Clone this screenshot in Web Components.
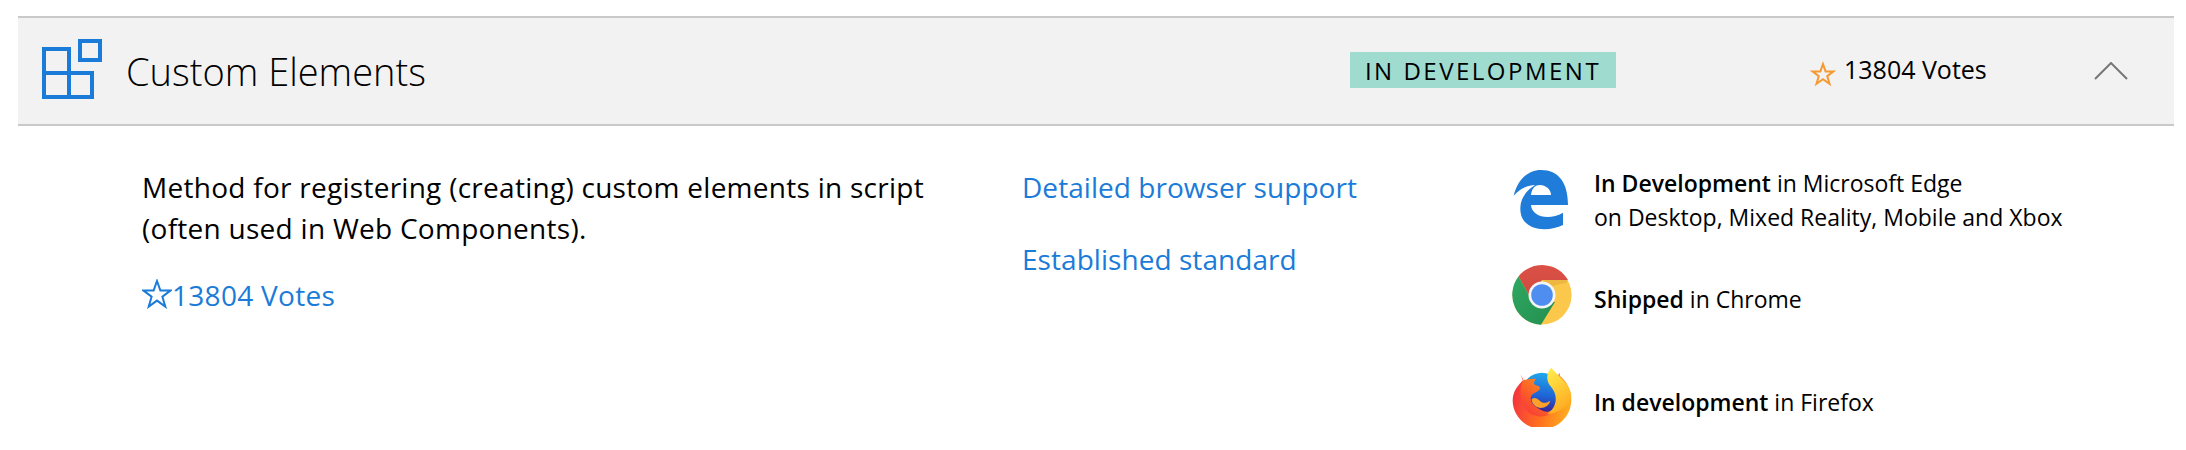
<!DOCTYPE html>
<html lang="en"><head><meta charset="utf-8"><title>Custom Elements</title>
<style>
html,body{margin:0;background:#fff}
body{padding:16px 12px 0 18px;font-family:"Open Sans","Noto Sans",sans-serif;color:#000}
</style></head><body>
<status-card name="Custom Elements" status="IN DEVELOPMENT" votes="13804 Votes">
  <span slot="desc">Method for registering (creating) custom elements in script<br>(often used in Web Components).</span>
  <a slot="links" href="#">Detailed browser support</a>
  <a slot="links" href="#">Established standard</a>
  <browser-row icon="edge" style="--dy:0px"><b>In Development</b> in Microsoft Edge<br>on Desktop, Mixed Reality, Mobile and Xbox</browser-row>
  <browser-row icon="chrome" style="--dy:8px;margin-top:31px"><b>Shipped</b> in Chrome</browser-row>
  <browser-row icon="firefox" style="--dy:10px;margin-top:42px"><b>In development</b> in Firefox</browser-row>
</status-card>
<script>
const ICONS={
edge:`<svg viewBox="65 55 180 180" width="60" height="60"><path fill="#1f7cd8" d="M70 132C82 85 112 55 152 55C204 55 233 92 233 160H122C124 195 175 208 218 183V220C172 243 88 240 90 168C91 140 108 115 135 100C112 100 90 110 70 132ZM122 130H182C182 106 148 90 130 108C125 114 123 122 122 130Z"/></svg>`,
chrome:`<svg viewBox="0 0 60 60" width="60" height="60"><defs><linearGradient id="r" x1="0" y1="0" x2="0" y2="1"><stop offset="0" stop-color="#db5047"/><stop offset="1" stop-color="#d04a3f"/></linearGradient><linearGradient id="g" x1="0" y1="0" x2="1" y2="1"><stop offset="0" stop-color="#2fa862"/><stop offset="1" stop-color="#238f4f"/></linearGradient></defs>
<circle cx="30" cy="30" r="29.6" fill="#fcc84b"/>
<path fill="url(#r)" d="M56 15A30 30 0 0 0 6.5 11.5L18 32L30 15Z"/>
<path fill="url(#g)" d="M6.5 11.5A30 30 0 0 0 29 59.8L43 37L18 32Z"/>
<path fill="#e0a93a" opacity=".55" d="M30 15H56L54 18L40 21Z"/>
<circle cx="30" cy="30" r="13.5" fill="#f4f5f7"/><circle cx="30" cy="30" r="10.8" fill="#4f8ef0"/></svg>`,
firefox:`<svg viewBox="65 45 180 180" width="60" height="60" style="overflow:visible"><defs>
<linearGradient id="b" x1="0" y1=".5" x2="1" y2=".7"><stop offset="0" stop-color="#f5343f"/><stop offset=".5" stop-color="#ff6f1f"/><stop offset="1" stop-color="#ffb21e"/></linearGradient>
<linearGradient id="d" x1=".6" y1="0" x2=".5" y2="1"><stop offset="0" stop-color="#22a9ec"/><stop offset=".6" stop-color="#1f62d4"/><stop offset="1" stop-color="#3b1d8f"/></linearGradient>
<linearGradient id="y" x1=".3" y1="0" x2=".7" y2="1"><stop offset="0" stop-color="#ffe94a"/><stop offset="1" stop-color="#ffa51e"/></linearGradient>
<linearGradient id="h" x1=".9" y1="0" x2=".1" y2="1"><stop offset="0" stop-color="#ff9a1e"/><stop offset=".6" stop-color="#fb5a28"/><stop offset="1" stop-color="#f5343f"/></linearGradient></defs>
<path fill="url(#b)" d="M91 67L99 84C82 100 68 118 67 145C67 192 106 231 155 231C204 231 243 192 243 143C243 112 228 88 209 72L208 62L200 74L160 100L110 90L98 88Z"/>
<circle cx="155" cy="122" r="60" fill="url(#d)"/>
<path fill="url(#h)" d="M99 84C110 82 124 80 137 80C130 90 128 96 136 100C148 102 152 108 146 114C138 122 126 124 122 134C118 148 128 160 146 170C160 180 176 182 190 178C170 200 128 200 106 172C88 148 86 110 99 84Z"/>
<path fill="#ffa02a" d="M124 142C132 134 142 140 150 148C160 156 170 152 180 146C176 162 158 172 142 166C132 162 124 152 124 142Z"/>
<path fill="url(#y)" d="M183 47C168 62 166 86 182 104C202 128 204 162 170 187C210 182 240 160 243 132C240 96 204 74 183 47Z"/>
</svg>`};
class CmdIcon extends HTMLElement{constructor(){super();this.attachShadow({mode:'open'}).innerHTML=`<style>:host{display:block;width:60px;height:60px;line-height:0}</style>
<svg width="60" height="60" viewBox="0 0 60 60" fill="none" stroke="#1b7bd8" stroke-width="4"><path d="M2 10H27V58H2ZM2 34H50V58H27"/><rect x="38" y="2" width="20" height="19"/></svg>`}}
customElements.define('feature-icon',CmdIcon);
class BrowserRow extends HTMLElement{constructor(){super();const s=this.attachShadow({mode:'open'});s.innerHTML=`<style>
:host{display:flex;align-items:center;gap:22px;font-size:23px;line-height:34px;color:#000}
.i{width:60px;height:60px;flex:none;line-height:0}.t{padding-top:var(--dy,0);white-space:nowrap}
::slotted(b){font-weight:600}
</style><div class="i"></div><div class="t"><slot></slot></div>`;
this._s=s}
connectedCallback(){this._s.querySelector('.i').innerHTML=ICONS[this.getAttribute('icon')]}}
customElements.define('browser-row',BrowserRow);
class StatusCard extends HTMLElement{constructor(){super();const s=this.attachShadow({mode:'open'});s.innerHTML=`<style>
:host{display:block}
header{height:106px;background:#f2f2f2;border-top:2px solid #c9c9c9;border-bottom:2px solid #c9c9c9;display:grid;grid-template-columns:108px 1224px 460px 284px 1fr;align-items:center;box-sizing:content-box}
.ic{padding-left:24px;margin-top:-5px}
h2{margin:0;font-weight:300;font-size:38px;line-height:50px;margin-top:-1px;white-space:nowrap}
.badge{justify-self:start;background:#9fdccf;height:36px;width:266px;display:flex;align-items:center;justify-content:center;font-size:24px;letter-spacing:2.5px;white-space:nowrap;margin-top:-2px}
.votes{display:flex;align-items:center;gap:8px;font-size:25px;white-space:nowrap;margin-top:-5px}
.votes svg{margin-top:10px}
.chev{margin-top:-1px;line-height:0}
main{display:grid;grid-template-columns:124px 880px 490px 1fr;padding-top:41px}
.desc{font-size:28px;line-height:41px;letter-spacing:.27px;white-space:nowrap}
.vote{display:flex;align-items:flex-end;margin-top:26px;color:#1b7bd8;letter-spacing:.3px}
.links{display:flex;flex-direction:column;gap:31px;font-size:28px;line-height:41px;letter-spacing:.05px}
.links ::slotted(a){color:#1b7bd8;text-decoration:none}
.rows{display:flex;flex-direction:column;margin-top:-1px}
</style>
<header>
 <div class="ic"><feature-icon></feature-icon></div>
 <h2></h2>
 <div class="badge"></div>
 <div class="votes"><svg width="26" height="26" viewBox="0 0 26 26" fill="none" stroke="#f59a33" stroke-width="2"><path d="M13 3L15.6 10.4H23.4L17.2 15.1L19.5 22.7L13 18.2L6.5 22.7L8.8 15.1L2.6 10.4H10.4Z"/></svg><span id="v"></span></div>
 <div class="chev"><svg width="34" height="18" viewBox="0 0 34 18" fill="none" stroke="#777" stroke-width="2"><path d="M1 17L17 1L33 17"/></svg></div>
</header>
<main>
 <div></div>
 <div class="desc"><slot name="desc"></slot>
  <div class="vote"><svg width="30" height="30" viewBox="0 0 30 30" fill="none" stroke="#1b7bd8" stroke-width="2" style="margin-bottom:7px"><path d="M15 2L18.4 11.6H28.4L20.4 17.7L23.3 27.6L15 21.6L6.7 27.6L9.6 17.7L1.6 11.6H11.6Z"/></svg><span id="v2"></span></div>
 </div>
 <div class="links"><slot name="links"></slot></div>
 <div class="rows"><slot></slot></div>
</main>`;
s.querySelector('h2').textContent=this.getAttribute('name');
s.querySelector('.badge').textContent=this.getAttribute('status');
s.getElementById('v').textContent=this.getAttribute('votes');
s.getElementById('v2').textContent=this.getAttribute('votes');
}}
customElements.define('status-card',StatusCard);
</script>
</body></html>
